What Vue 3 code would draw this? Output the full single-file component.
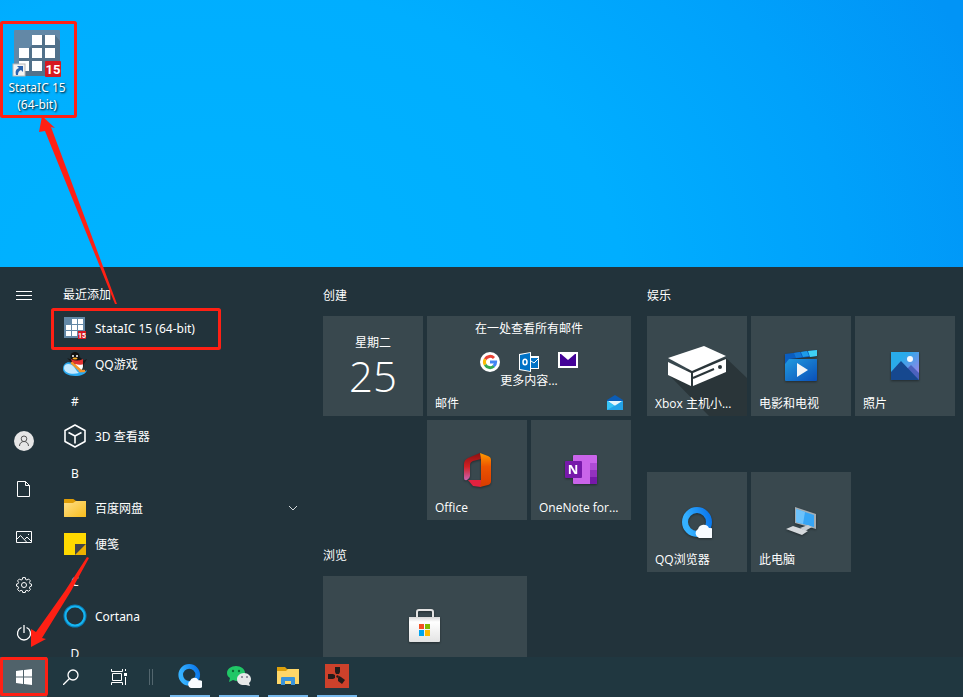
<script setup>
const apps = [
  { type: 'app', name: 'StataIC 15 (64-bit)', icon: 'stata' },
  { type: 'app', name: 'QQ游戏', icon: 'qqgame' },
  { type: 'letter', name: '#' },
  { type: 'app', name: '3D 查看器', icon: 'cube' },
  { type: 'letter', name: 'B' },
  { type: 'app', name: '百度网盘', icon: 'folder', expandable: true },
  { type: 'app', name: '便笺', icon: 'note' },
  { type: 'letter', name: 'C' },
  { type: 'app', name: 'Cortana', icon: 'cortana' },
  { type: 'letter', name: 'D' },
]
</script>

<template>
  <div class="screen">
    <main class="desktop">
      <a class="shortcut" href="#">
        <svg class="shortcut-icon" width="50" height="48" viewBox="0 0 50 48" aria-hidden="true">
          <rect x="2" y="0" width="46" height="46" rx="1" fill="#6388a6" />
          <path d="M43 5L48 11V46H12L7 41L7 28L20 15L20 5Z" fill="#52718a" />
          <path d="M20 5h10v10H20zM33 5h10v10H33zM7 18h10v10H7zM20 18h10v10H20zM33 18h10v10H33zM7 31h10v10H7zM20 31h10v10H20z" fill="#fff" />
          <rect x="33" y="31" width="16" height="16" rx="1" fill="#d71920" />
          <text x="41" y="44" text-anchor="middle" class="badge-text">15</text>
          <rect x="1" y="34" width="12" height="12" fill="#f4f4f4" stroke="#b8b8b8" />
          <path d="M5 36h6v6l-2-2c-2 1-3 2-3 5H4c-1-4 0-6 3-7z" fill="#2b62ad" />
        </svg>
        <span>StataIC 15<br />(64-bit)</span>
      </a>
    </main>

    <section class="menu" aria-label="Start">
      <nav class="rail">
        <button class="rail-btn" aria-label="展开">
          <svg width="16" height="10" viewBox="0 0 16 10"><path d="M0 .5h16M0 4.5h16M0 8.5h16" stroke="#fff" /></svg>
        </button>
        <span class="spacer"></span>
        <button class="rail-btn" aria-label="帐户">
          <svg width="20" height="20" viewBox="0 0 20 20"><circle cx="10" cy="10" r="10" fill="#e6e6e6" /><circle cx="10" cy="7.800" r="2.800" fill="none" stroke="#555" /><path d="M5.500 15c0-6 9-6 9 0" fill="none" stroke="#555" /></svg>
        </button>
        <button class="rail-btn" aria-label="文档">
          <svg width="14" height="16" viewBox="0 0 14 16"><path d="M.5.5h8l4 4v11H.5zM8.500.5v4h4" fill="none" stroke="#fff" /></svg>
        </button>
        <button class="rail-btn" aria-label="图片">
          <svg width="16" height="12" viewBox="0 0 16 12"><path d="M.5.5h15v11H.5zM.5 8.500l4-4 6.500 7M8.500 8.500l2.500-2.500 4.500 4.500" fill="none" stroke="#fff" /><rect x="12" y="3" width="1" height="1" fill="#fff" /></svg>
        </button>
        <button class="rail-btn" aria-label="设置">
          <svg width="16" height="16" viewBox="0 0 16 16" fill="none" stroke="#fff"><path d="M6.700.6h2.600l.4 1.900 1.200.5 1.700-1 1.800 1.800-1 1.700.5 1.200 1.600.4v2l-1.600.5-.5 1.200 1 1.700-1.800 1.800-1.700-1-1.200.5-.4 1.700H6.700l-.4-1.700-1.200-.5-1.700 1-1.800-1.800 1-1.700-.5-1.200-1.600-.5v-2l1.600-.4.5-1.200-1-1.700L3.400 2l1.700 1 1.200-.5z" /><circle cx="8" cy="8" r="2.500" /></svg>
        </button>
        <button class="rail-btn" aria-label="电源">
          <svg width="16" height="18" viewBox="0 0 16 18" fill="none" stroke="#fff" stroke-width="1.300"><path d="M5.500 3.500a6.500 6.500 0 1 0 5 0M8 1v8" /></svg>
        </button>
      </nav>

      <div class="apps">
        <h2 class="apps-title">最近添加</h2>
        <template v-for="item in apps" :key="item.name">
          <div v-if="item.type === 'letter'" class="letter"><span>{{ item.name }}</span></div>
          <button v-else class="app">
            <span class="app-icon">
              <svg v-if="item.icon === 'stata'" width="22" height="22" viewBox="0 0 22 22">
                <rect width="21" height="21" fill="#6388a6" />
                <path d="M8 2h5v5H8zM14 2h5v5h-5zM2 8h5v5H2zM8 8h5v5H8zM14 8h5v5h-5zM2 14h5v5H2zM8 14h5v5H8z" fill="#fff" />
                <rect x="14" y="14" width="8" height="8" fill="#d71920" />
                <text x="18" y="21" text-anchor="middle" class="badge-small">15</text>
              </svg>
              <svg v-else-if="item.icon === 'qqgame'" width="24" height="24" viewBox="0 0 24 24">
                <ellipse cx="15" cy="12" rx="6" ry="7" fill="#161616" />
                <path d="M4 6l8 3-2 3zM20 9l4-2-3 5z" fill="#161616" />
                <ellipse cx="12" cy="4.500" rx="4.500" ry="4.500" fill="#111" />
                <ellipse cx="16" cy="14" rx="4" ry="5" fill="#fff" />
                <path d="M8 7c4 2 8 2 12 0v5c-4 2-8 0-11-2z" fill="#e23232" />
                <circle cx="10" cy="4" r="1" fill="#fff" /><circle cx="14" cy="4" r="1" fill="#fff" />
                <ellipse cx="12" cy="6.500" rx="2.500" ry="1" fill="#ffad22" />
                <path d="M0 17C0 11 5 9 9 11c4 2 5 8 10 9 2 0 4-1 5-2-1 4-6 6-12 6C5 24 0 21 0 17z" fill="#2aaaf0" />
                <path d="M1 16c0-4 4-5 8-3 3 2 4 6 7 8-7 2-15 0-15-5z" fill="#c3e9ff" />
                <path d="M9 11l9 8M17 19h4" stroke="#f3942c" stroke-width="2.500" stroke-linecap="round" />
              </svg>
              <svg v-else-if="item.icon === 'cube'" width="24" height="24" viewBox="0 0 24 24" fill="none" stroke="#fff" stroke-width="1.600"><path d="M12 1l10 5.500v11L12 23 2 17.500v-11zM5.500 8.500L12 12l6.500-3.500M12 12v7.500" stroke-linejoin="round" /></svg>
              <svg v-else-if="item.icon === 'folder'" width="24" height="20" viewBox="0 0 24 20">
                <defs><linearGradient id="folder" x1="0" y1="0" x2="1" y2="1"><stop offset="0" stop-color="#ffe08a" /><stop offset="1" stop-color="#f8bd1c" /></linearGradient></defs>
                <path d="M1 2c0-1 0-1 1-1h8c1 0 2 2 4 2v4H1z" fill="#df9d06" /><path d="M1 5h9l3-2h10v15c0 1 0 1-1 1H2c-1 0-1 0-1-1z" fill="url(#folder)" />
              </svg>
              <svg v-else-if="item.icon === 'note'" width="22" height="22" viewBox="0 0 22 22"><path d="M0 0h22v22H0z" fill="#ffd900" /><path d="M22 11v11H11z" fill="#eeb000" /><path d="M11 11h11L11 22z" fill="#424448" /></svg>
              <svg v-else width="24" height="24" viewBox="0 0 24 24" fill="none"><circle cx="12" cy="12" r="10.500" stroke="#087fb8" stroke-width="2" /><circle cx="12" cy="12" r="9.500" stroke="#16b5f2" stroke-width="2" /></svg>
            </span>
            <span class="app-name">{{ item.name }}</span>
            <svg v-if="item.expandable" class="chevron" width="10" height="6" viewBox="0 0 10 6"><path d="M1 1l4 4 4-4" fill="none" stroke="#d5dadc" /></svg>
          </button>
        </template>
      </div>

      <div class="groups">
        <div class="group">
          <h2>创建</h2>
          <div class="tiles">
            <button class="tile calendar"><span>星期二</span><span class="day">25</span></button>
            <button class="tile wide mail">
              <span>在一处查看所有邮件</span>
              <span class="mail-icons">
                <svg width="20" height="20" viewBox="0 0 20 20">
                  <circle cx="10" cy="10" r="10" fill="#fff" />
                  <g fill="none" stroke-width="3"><path d="M5.200 7.200A5.600 5.600 0 0 1 14 6" stroke="#ea4335" /><path d="M5.200 12.800a5.600 5.600 0 0 1 0-5.600" stroke="#fbbc05" /><path d="M14 14a5.600 5.600 0 0 1-8.800-1.200" stroke="#34a853" /><path d="M10 10h5.600a5.600 5.600 0 0 1-1.900 4.200" stroke="#4285f4" /></g>
                </svg>
                <svg width="20" height="20" viewBox="0 0 20 20">
                  <path d="M0 2l12-2v4h8v13h-8v3L0 18z" fill="#fff" /><path d="M1 3l10-2v18L1 17zM12 6h7v10h-7z" fill="#0072c6" />
                  <ellipse cx="6" cy="10" rx="2" ry="2.800" fill="none" stroke="#fff" stroke-width="1.500" /><path d="M12 9l3 2 4-4" fill="none" stroke="#fff" />
                </svg>
                <svg width="20" height="16" viewBox="0 0 20 16"><path d="M0 0h20v16H0z" fill="#fff" /><path d="M2 2h16v12H2z" fill="#430297" /><path d="M3 2h14l-7 6z" fill="#fff" /></svg>
              </span>
              <span class="more">更多内容...</span>
              <span class="tile-name">邮件</span>
              <svg class="mail-badge" width="16" height="15" viewBox="0 0 16 15"><path d="M0 5l8-5 8 5v2H0z" fill="#0b5cb5" /><path d="M0 6h16v9H0z" fill="#2fb7f2" /><path d="M1 6h14l-7 5z" fill="#e9f5fb" /><path d="M0 6l8 5-8 4z" fill="#36c3f6" /><path d="M16 6v9H0z" fill="#1c94e0" opacity=".6" /></svg>
            </button>
            <button class="tile second">
              <svg class="tile-icon" width="28" height="36" viewBox="0 0 28 36">
                <defs><linearGradient id="officeR" x1="0" y1="0" x2="0" y2="1"><stop offset="0" stop-color="#ff9a00" /><stop offset=".4" stop-color="#ec5400" /><stop offset="1" stop-color="#d83b01" /></linearGradient><linearGradient id="officeL" x1="0" y1="0" x2="0" y2="1"><stop offset="0" stop-color="#8c1010" /><stop offset=".5" stop-color="#d01f23" /><stop offset="1" stop-color="#c964b4" /></linearGradient></defs>
                <path d="M17 1L5 6Q1 8 1 12v14q0 3 3 2 3-2 3-4V13q0-3 3-4l8-2z" fill="url(#officeL)" /><path d="M5 28l5 6 8 1 2-7z" fill="#e2213f" /><path d="M17 1l8 3q3 1 3 4v21q0 3-3 4l-8 2 1-7V7z" fill="url(#officeR)" />
              </svg>
              <span class="tile-name">Office</span>
            </button>
            <button class="tile">
              <svg class="tile-icon" width="32" height="30" viewBox="0 0 32 30">
                <rect x="8" y="0" width="24" height="29" rx="1" fill="#ca64ea" /><path d="M25 8h7v7h-7z" fill="#ae4bd5" /><path d="M25 15h7v7h-7z" fill="#9332bf" /><path d="M25 22h7v7h-7z" fill="#7719aa" /><rect y="6" width="17" height="17" rx="1" fill="#7719aa" /><text x="8" y="19" text-anchor="middle" class="note-letter">N</text>
              </svg>
              <span class="tile-name">OneNote for...</span>
            </button>
          </div>
          <h2 class="next">浏览</h2>
          <div class="tiles">
            <button class="tile wide" aria-label="Microsoft Store">
              <svg class="tile-icon store" width="32" height="34" viewBox="0 0 32 34">
                <defs><linearGradient id="bag" x1="0" y1="0" x2="0" y2="1"><stop offset="0" stop-color="#d8d8d8" /><stop offset=".2" stop-color="#fff" /><stop offset="1" stop-color="#e3e3e3" /></linearGradient></defs>
                <path d="M8 10V3q0-2 2-2h12q2 0 2 2v7" fill="none" stroke="#e3e3e3" stroke-width="2" /><path d="M0 8h31v24q0 1-1 1H1q-1 0-1-1z" fill="url(#bag)" /><path d="M10 15h5v5h-5z" fill="#f25022" /><path d="M16 15h5v5h-5z" fill="#7fba00" /><path d="M10 21h5v6h-5z" fill="#00a4ef" /><path d="M16 21h5v6h-5z" fill="#ffb900" />
              </svg>
            </button>
          </div>
        </div>

        <div class="group">
          <h2>娱乐</h2>
          <div class="tiles">
            <button class="tile">
              <svg class="tile-art" width="100" height="100" viewBox="0 0 100 100">
                <path d="M79 42l21 20v38H62L22 59z" fill="#2a3539" />
                <path d="M21 42l36-12 22 10-34 15z" fill="#fff" /><path d="M21 46l23 11v13L21 59z" fill="#fff" /><path d="M46 57l33-14v13L46 70z" fill="#fff" /><path d="M46 62l21-9" stroke="#2a3539" stroke-width="2" /><circle cx="73" cy="51" r="2" fill="#2a3539" />
              </svg>
              <span class="tile-name">Xbox 主机小...</span>
            </button>
            <button class="tile">
              <svg class="tile-icon" width="32" height="32" viewBox="0 0 32 32">
                <defs><linearGradient id="film" x1="0" y1="0" x2="1" y2="1"><stop offset="0" stop-color="#209be0" /><stop offset="1" stop-color="#0b4fb8" /></linearGradient></defs>
                <path d="M0 4l32-4v6L5 9l-5 6z" fill="#0a5ec0" /><path d="M9 3l6-1 2 5-6 1z" fill="#1377d4" /><path d="M16 2l6-1 2 5-6 1z" fill="#1e9be8" /><path d="M23 1l9-1v6l-7 1z" fill="#3fd0f5" /><path d="M4 9h28v21q0 1-1 1H1q-1 0-1-1V14z" fill="url(#film)" /><path d="M12 13l11 7-11 7z" fill="#f2f4f6" />
              </svg>
              <span class="tile-name">电影和电视</span>
            </button>
            <button class="tile">
              <svg class="tile-icon" width="28" height="28" viewBox="0 0 28 28">
                <defs><linearGradient id="sky" x1="0" y1="0" x2="1" y2="1"><stop offset=".3" stop-color="#29abea" /><stop offset="1" stop-color="#b07be6" /></linearGradient></defs>
                <path d="M0 0h28v28H0z" fill="url(#sky)" /><path d="M12 21l8-8 8 8v7H12z" fill="#4b61bd" /><path d="M0 20L10 9l18 19H0z" fill="#16488f" /><circle cx="19" cy="7" r="3" fill="#f6f9fc" />
              </svg>
              <span class="tile-name">照片</span>
            </button>
          </div>
          <div class="tiles apart">
            <button class="tile">
              <svg class="tile-icon" width="30" height="31" viewBox="0 0 30 31">
                <defs><linearGradient id="ring" x1="0" y1=".3" x2="1" y2="0"><stop offset="0" stop-color="#35b1ff" /><stop offset="1" stop-color="#0a76ec" /></linearGradient></defs>
                <circle cx="15" cy="15" r="12" fill="none" stroke="url(#ring)" stroke-width="6" /><path d="M17 31a5 5 0 0 1-1-9 6 6 0 0 1 11-1 5 5 0 0 1 2 10z" fill="#f7fbff" />
              </svg>
              <span class="tile-name">QQ浏览器</span>
            </button>
            <button class="tile">
              <svg class="tile-icon" width="30" height="30" viewBox="0 0 30 30">
                <path d="M9 0l21 7v15L9 16z" fill="#a3adb3" /><path d="M10 2l18 6v12l-18-5z" fill="#36a5f5" /><path d="M10 2l9 3-2 12-7-2z" fill="#6dc2fb" /><path d="M14 21l8-3 4 2-7 4z" fill="#c5cdd2" /><path d="M0 22l7-3 15 5-6 4z" fill="#d5d9dc" />
              </svg>
              <span class="tile-name">此电脑</span>
            </button>
          </div>
        </div>
      </div>
    </section>

    <footer class="taskbar">
      <button class="task start" aria-label="开始">
        <svg width="16" height="16" viewBox="0 0 16 16" fill="#fff"><path d="M0 2l7-1v6.500H0zM8 1l8-1v7.500H8zM0 8.500h7V15l-7-1zM8 8.500h8V16l-8-1z" /></svg>
      </button>
      <button class="task" aria-label="搜索">
        <svg width="16" height="16" viewBox="0 0 16 16" fill="none" stroke="#fff" stroke-width="1.300"><circle cx="10" cy="6" r="5" /><path d="M6.500 9.500L0 16" /></svg>
      </button>
      <button class="task" aria-label="任务视图">
        <svg width="17" height="16" viewBox="0 0 17 16" fill="none" stroke="#fff"><path d="M1.500 4.500h9v7h-9zM.5 0v2.500h11V0M.5 16v-2.500h11V16M14.500 0v2M14.500 8v8" /><path d="M13 4h3v3h-3z" fill="#fff" stroke="none" /></svg>
      </button>
      <span class="divider"></span>
      <div class="running">
        <button aria-label="QQ浏览器">
          <svg width="24" height="24" viewBox="0 0 30 31"><circle cx="14" cy="14" r="11" fill="none" stroke="url(#ring)" stroke-width="6" /><path d="M16 31a5 5 0 0 1-1-9 6 6 0 0 1 11-1 5 5 0 0 1 2 10z" fill="#f7fbff" /></svg>
        </button>
        <button aria-label="微信">
          <svg width="24" height="22" viewBox="0 0 24 22"><path d="M9 1c5 0 9 3 9 7s-4 8-9 8l-3-1-4 2 1-4c-2-1-3-3-3-5 0-4 4-7 9-7z" fill="#20c766" /><path d="M17 8c4 0 7 3 7 6 0 2-1 3-2 4l1 3-4-1h-2c-4 0-7-2-7-6 0-3 3-6 7-6z" fill="#e6e8e8" /><circle cx="6" cy="6" r="1.200" fill="#0c6c35" /><circle cx="12" cy="6" r="1.200" fill="#0c6c35" /><circle cx="15" cy="12" r="1" fill="#778" /><circle cx="20" cy="12" r="1" fill="#778" /></svg>
        </button>
        <button aria-label="文件资源管理器">
          <svg width="22" height="18" viewBox="0 0 22 18"><path d="M0 0h8l2 2H22v4H0z" fill="#dda00c" /><path d="M0 4h9l2-2h11v15H0z" fill="#ffd768" /><path d="M4 11q0-1 1-1h12q1 0 1 1v7h-4v-4H8v4H4z" fill="#3a94da" /></svg>
        </button>
        <button aria-label="Rust">
          <svg width="24" height="24" viewBox="0 0 24 24"><path d="M0 0h24v24H0z" fill="#cd412b" /><g fill="#241b1a"><path d="M10 3h5v5l-1 2h-3l-1-2z" /><path d="M3 10h5l2 1v3l-2 1H3z" /><path d="M14 12l2 1 4 3-3 4-4-3v-3z" /></g><circle cx="12.500" cy="12.500" r="1.200" fill="#241b1a" /></svg>
        </button>
      </div>
    </footer>

    <svg class="marks" width="963" height="697" viewBox="0 0 963 697" aria-hidden="true">
      <g fill="none" stroke="#ff2014" stroke-width="3"><rect x="1.500" y="22.500" width="74" height="94" rx="1" /><rect x="52.500" y="309.500" width="167" height="39" rx="1" /><rect x="1.500" y="658.500" width="45" height="36" rx="1" /></g>
      <g fill="#ff2014"><path d="M42 116L55 128L51 127L117 304L115 304L45 131L39 132Z" /><path d="M31 647L31 629L36 632L65 591L87 557L89 558L71 591L42 638L46 639Z" /></g>
    </svg>
  </div>
</template>

<style>
body {
  margin: 0;
}
</style>

<style scoped>
.screen {
  position: relative;
  display: flex;
  flex-direction: column;
  min-height: 100vh;
  overflow: hidden;
  color: #fff;
  font: 12px/16px "Open Sans", "Noto Sans CJK SC", sans-serif;
}
button {
  margin: 0;
  padding: 0;
  border: 0;
  background: none;
  color: inherit;
  font: inherit;
}
h2 {
  margin: 0;
  font: inherit;
}
svg {
  display: block;
}
.desktop {
  flex: 1;
  padding: 30px 0 0;
  background: radial-gradient(ellipse 95% 260% at 22% 110%, #00b4ff 0%, #00aeff 45%, #00a1fb 70%, #0194f6 90%);
}
.shortcut {
  display: flex;
  flex-direction: column;
  align-items: center;
  gap: 1px;
  width: 74px;
  color: #fff;
  font-family: "Noto Sans", "Noto Sans CJK SC", sans-serif;
  line-height: 17px;
  text-align: center;
  text-decoration: none;
  text-shadow: 1px 1px 2px #000;
}
.badge-text {
  fill: #fff;
  font: bold 13px Roboto, sans-serif;
  text-shadow: none;
}
.badge-small {
  fill: #fff;
  font: bold 7px Roboto, sans-serif;
}
.note-letter {
  fill: #fff;
  font: bold 13px "Open Sans", sans-serif;
}
.menu {
  display: flex;
  flex: 0 0 390px;
  height: 390px;
  overflow: hidden;
  background: #22333b;
}
.rail {
  display: flex;
  flex: 0 0 48px;
  flex-direction: column;
  padding-top: 5px;
}
.rail-btn {
  display: grid;
  flex: 0 0 48px;
  place-items: center;
}
.spacer {
  flex: 1;
}
.apps {
  flex: 0 0 267px;
  overflow: hidden;
  font-family: "Noto Sans", "Noto Sans CJK SC", sans-serif;
}
.apps-title {
  height: 23px;
  padding: 20px 0 0 15px;
}
.app {
  display: flex;
  align-items: center;
  gap: 8px;
  width: 100%;
  height: 36px;
  padding: 0 17px 0 15px;
  text-align: left;
}
.app-icon {
  display: grid;
  flex: 0 0 24px;
  place-items: center;
}
.app-name {
  flex: 1;
  padding-top: 2px;
}
.letter {
  height: 32px;
  padding: 4px 0 0 15px;
  line-height: 32px;
}
.letter span {
  display: block;
  width: 24px;
  text-align: center;
}
.groups {
  display: flex;
  flex: 1;
  gap: 16px;
  padding: 21px 8px 0;
}
.group {
  width: 308px;
}
.tiles {
  display: grid;
  grid-template-columns: repeat(3, 100px);
  grid-auto-rows: 100px;
  gap: 4px;
  margin-top: 12px;
}
.next {
  margin-top: 28px;
}
.apart {
  margin-top: 56px;
}
.tile {
  position: relative;
  display: grid;
  place-items: center;
  background: #39484e;
}
.wide {
  grid-column: span 2;
}
.second {
  grid-column: 2;
}
.tile-name {
  position: absolute;
  bottom: 4px;
  left: 8px;
}
.tile-art {
  position: absolute;
  inset: 0;
}
.tile-icon {
  filter: drop-shadow(0 1px 1px #0006);
}
.calendar {
  align-content: start;
  padding-top: 19px;
}
.day {
  font: 300 42px/50px "Open Sans", sans-serif;
}
.mail {
  align-content: start;
  padding-top: 5px;
}
.mail-icons {
  display: flex;
  gap: 19px;
  height: 20px;
  margin-top: 15px;
}
.more {
  line-height: 17px;
}
.mail-badge {
  position: absolute;
  right: 8px;
  bottom: 6px;
}
.taskbar {
  display: flex;
  flex: 0 0 40px;
  background: #203740;
}
.task {
  display: grid;
  flex: 0 0 48px;
  place-items: center;
}
.start {
  flex-basis: 47px;
  background: #50626a;
}
.divider {
  width: 2px;
  height: 16px;
  margin: 12px 17px 0 6px;
  border: solid #53666e;
  border-width: 0 1px;
}
.running {
  display: flex;
  gap: 9px;
}
.running button {
  display: grid;
  width: 40px;
  border-bottom: 2px solid #76b9ed;
  place-items: center;
}
.marks {
  position: absolute;
  top: 0;
  left: 0;
  pointer-events: none;
}
</style>
